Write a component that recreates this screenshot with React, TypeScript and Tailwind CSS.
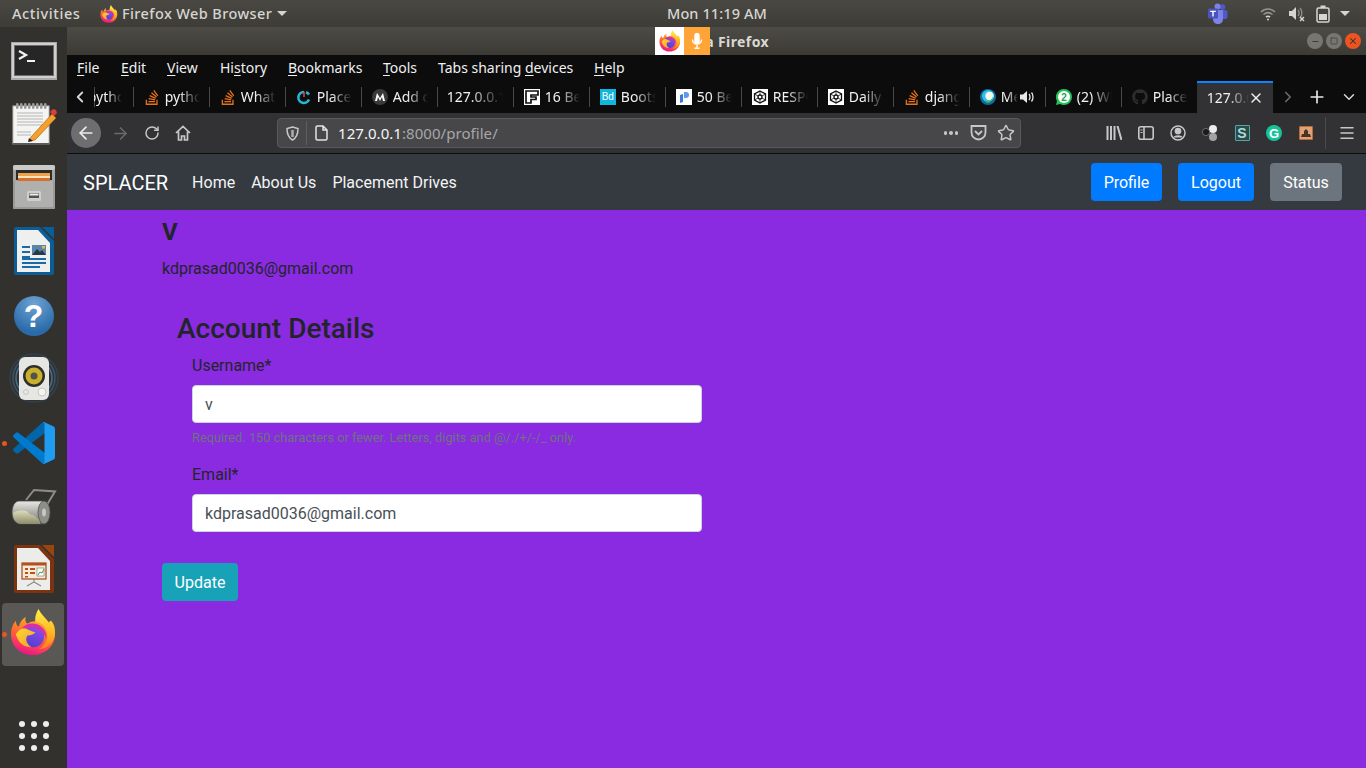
import React from "react";
import { ArrowLeft, ArrowRight, RotateCw, ChevronLeft, ChevronRight, ChevronDown, Plus, X, Star, Menu, Minus, Square } from "lucide-react";
import { FaStackOverflow, FaGithub } from "react-icons/fa";

function Firefox({ id, size }: { id: string; size: number }) {
  return (
    <svg width={size} height={size} viewBox="0 0 48 48" className="shrink-0">
      <defs>
        <linearGradient id={id + "a"} x1="0.7" y1="0.1" x2="0.35" y2="1">
          <stop offset="0" stopColor="#ffb02e" />
          <stop offset="0.45" stopColor="#ff6b2e" />
          <stop offset="0.8" stopColor="#f8306a" />
          <stop offset="1" stopColor="#e31587" />
        </linearGradient>
        <linearGradient id={id + "b"} x1="0.7" y1="0" x2="0.3" y2="1">
          <stop offset="0" stopColor="#9a4be8" />
          <stop offset="1" stopColor="#4b3fd0" />
        </linearGradient>
        <linearGradient id={id + "c"} x1="0" y1="0" x2="1" y2="1">
          <stop offset="0" stopColor="#ffe02e" />
          <stop offset="1" stopColor="#ffa124" />
        </linearGradient>
        <linearGradient id={id + "d"} x1="0.5" y1="0" x2="0.5" y2="1">
          <stop offset="0" stopColor="#fff04a" />
          <stop offset="0.6" stopColor="#ffb51f" />
          <stop offset="1" stopColor="#ff7a22" />
        </linearGradient>
      </defs>
      <path d="M46 25C46 38 36 47 23 47 10 47 1 38 1 25 1 20 3 15 6 12c0 3 1 5 3 6 1-4 3-7 7-10-1 4 0 6 2 7 4-3 8-3 12-2l10 2z" fill={`url(#${id}a)`} />
      <circle cx="23.500" cy="27.500" r="11.500" fill={`url(#${id}b)`} />
      <path d="M12 20c4-6 14-7 20-2 4 3 6 8 5 13-1-6-6-11-13-12-4 0-8 2-12 1z" fill="#d62fa8" />
      <path d="M29 0c-2 4-4 9-3 13 8 1 13 8 12 16-1 6-5 10-9 12 9 0 17-7 17-17 0-5-1-9-4-12-1 0-2 1-2 2-3-4-8-8-11-14z" fill={`url(#${id}d)`} />
      <path d="M6 26c2-4 6-7 10-6 3 1 6 3 10 4-2 2-5 3-8 3-3 3-1 9 4 12-7 0-13-3-16-13z" fill={`url(#${id}c)`} opacity="0.95" />
    </svg>
  );
}

function UTop({ children, u, after }: { children?: React.ReactNode; u: string; after?: string }) {
  return (
    <span>
      {children}
      <span className="underline underline-offset-2">{u}</span>
      {after}
    </span>
  );
}

function TopBar() {
  return (
    <div className="h-[27px] shrink-0 flex items-center bg-[linear-gradient(#4a4843,#3e3c37)] text-[#d6d5d1] text-[14.500px] font-medium">
      <span className="ml-[12px] w-[88px] whitespace-nowrap tracking-[0.6px]">Activities</span>
      <Firefox id="tb" size={18} />
      <span className="ml-[4px] w-[155px] whitespace-nowrap tracking-[0.4px]">Firefox Web Browser</span>
      <span className="w-0 h-0 border-x-[5px] border-x-transparent border-t-[5px] border-t-[#d6d5d1]" />
      <span className="ml-[380px] w-[99px] text-center whitespace-nowrap tracking-[0.1px]">Mon 11:19 AM</span>
      <span className="ml-[442px]">
        <svg width="20" height="22" viewBox="0 0 20 22">
          <circle cx="14.500" cy="4" r="2.800" fill="#5059c9" />
          <rect x="11" y="7" width="8.500" height="9" rx="2" fill="#5059c9" />
          <circle cx="9.500" cy="3.500" r="3" fill="#7b83eb" />
          <path d="M5 7h10v9c0 3-2 5-5 5s-5-2-5-5z" fill="#7b83eb" />
          <rect x="0" y="5.500" width="10" height="10" rx="1" fill="#4b53bc" />
          <path d="M2.200 7.800h5.600v1.200H5.700v4.600H4.300V9H2.200z" fill="#fff" />
        </svg>
      </span>
      <span className="ml-[32px]">
        <svg width="16" height="14" viewBox="0 0 16 14" fill="none" stroke="#d6d5d1" strokeWidth="1.600">
          <path d="M1 5c4-4 10-4 14 0" opacity=".55" />
          <path d="M3.500 7.500c3-2.500 6-2.500 9 0" opacity=".55" />
          <path d="M6 10c1.300-1 2.700-1 4 0" />
          <circle cx="8" cy="12.500" r="1" fill="#d6d5d1" stroke="none" />
        </svg>
      </span>
      <span className="ml-[13px]">
        <svg width="16" height="16" viewBox="0 0 16 16" fill="#d6d5d1">
          <path d="M0 5h3l4-4v13l-4-4H0z" />
          <path d="M9 4c1.500 1.500 1.500 4.500 0 6M11 2c2.500 2.500 2.500 7 0 10" fill="none" stroke="#8f8e8a" strokeWidth="1.300" />
          <path d="M11 11l4 4M15 11l-4 4" stroke="#d6d5d1" strokeWidth="1.400" />
        </svg>
      </span>
      <span className="ml-[11px]">
        <svg width="14" height="18" viewBox="0 0 14 18" fill="none">
          <rect x="1" y="3" width="12" height="14" rx="1.500" stroke="#d6d5d1" strokeWidth="1.500" />
          <rect x="4.500" y="0.500" width="5" height="2.500" fill="#d6d5d1" />
          <rect x="3" y="9" width="8" height="6" fill="#d6d5d1" />
        </svg>
      </span>
      <span className="ml-[10px] w-0 h-0 border-x-[5px] border-x-transparent border-t-[5px] border-t-[#d6d5d1]" />
    </div>
  );
}

function Terminal() {
  return (
    <svg width="46" height="38" viewBox="0 0 46 38">
      <rect width="46" height="38" fill="#a9a9a7" />
      <rect x="1" y="1" width="44" height="35" fill="#cfcfcd" />
      <rect x="3" y="3" width="40" height="31" fill="#6c6c6a" />
      <rect x="4" y="4" width="38" height="29" fill="#262626" />
      <path d="M8 9l7 4-7 4" fill="none" stroke="#f2f2f2" strokeWidth="2.200" />
      <path d="M16 19h8" stroke="#f2f2f2" strokeWidth="2" />
    </svg>
  );
}
function Notes() {
  return (
    <svg width="46" height="46" viewBox="0 0 46 46">
      <rect x="2" y="5" width="36" height="38" fill="#f4f4f2" stroke="#bcbcb8" />
      <rect x="2" y="42" width="36" height="2" fill="#5a5a58" />
      {[5, 9, 13, 17, 21, 25, 29, 33].map((x) => (
        <rect key={x} x={x} y="2" width="2.500" height="6" rx="1.200" fill="#9a9a98" />
      ))}
      {[12, 15, 18, 21, 24, 31, 34].map((y) => (
        <path key={y} d={`M6 ${y}h${y > 28 ? 14 : 26}`} stroke="#b5b5b3" strokeWidth="1" />
      ))}
      <path d="M20 36l21-23 4 4-21 22-6 1z" fill="#f5a02c" stroke="#a9650f" strokeWidth="0.700" />
      <path d="M39 11l3-3 3 1 1 3-3 3z" fill="#d9403a" />
      <path d="M18 37l-1 4 5-1z" fill="#222" />
    </svg>
  );
}
function Cabinet() {
  return (
    <svg width="42" height="44" viewBox="0 0 42 44">
      <rect width="42" height="44" rx="2" fill="#a6a6a4" />
      <rect width="42" height="5" rx="2" fill="#c9c9c7" />
      <rect x="3" y="5" width="36" height="10" fill="#2b2b2b" />
      <rect x="5" y="8" width="32" height="8" fill="#f0a24a" />
      <rect x="5" y="11" width="32" height="2" fill="#fbe3c0" />
      <rect x="5" y="13" width="32" height="3" fill="#d86f28" />
      <rect x="0" y="16" width="42" height="28" rx="1" fill="#9a9a98" />
      <rect x="2" y="16" width="38" height="26" fill="#b0b0ae" />
      <rect x="14" y="26" width="14" height="10" rx="1.500" fill="#cfcfcd" />
      <rect x="16" y="28" width="10" height="5" fill="#55554f" />
      <rect x="16.500" y="28.500" width="9" height="2" fill="#eee" />
    </svg>
  );
}
function Writer() {
  return (
    <svg width="40" height="48" viewBox="0 0 40 48">
      <path d="M2 0h24l14 14v32a2 2 0 0 1-2 2H2a2 2 0 0 1-2-2V2a2 2 0 0 1 2-2z" fill="#0b5d96" />
      <path d="M28 0h12v12z" fill="#0b5d96" />
      <path d="M3 3h21l12 13v29H3z" fill="#eef0f0" />
      <rect x="8" y="19" width="8" height="2" fill="#1b6aa5" />
      <rect x="8" y="24" width="8" height="2" fill="#1b6aa5" />
      <rect x="8" y="29" width="8" height="2" fill="#1b6aa5" />
      <rect x="18" y="18" width="14" height="10" fill="#5b84a8" />
      <path d="M18 28l5-6 3 3 2-2 4 5z" fill="#28384a" />
      <rect x="28" y="19" width="3" height="2.500" fill="#e8b93f" />
      <rect x="8" y="31" width="24" height="2" fill="#1b6aa5" />
      <rect x="8" y="35" width="24" height="2" fill="#1b6aa5" />
      <rect x="8" y="39" width="18" height="2" fill="#1b6aa5" />
    </svg>
  );
}
function Help() {
  return (
    <div className="mt-[2px] w-[40px] h-[40px] rounded-full bg-[radial-gradient(circle_at_50%_20%,#6fa3d4,#2a6aa8_75%)] flex items-center justify-center text-white text-[32px] font-bold font-['Liberation_Sans',sans-serif] leading-none">
      ?
    </div>
  );
}
function Speaker() {
  return (
    <svg width="50" height="50" viewBox="0 0 50 50">
      <circle cx="25" cy="25" r="24" fill="none" stroke="#2f4860" strokeWidth="1.500" opacity="0.7" />
      <circle cx="25" cy="25" r="21" fill="none" stroke="#3c5c7c" strokeWidth="1.500" opacity="0.8" />
      <circle cx="25" cy="25" r="18" fill="none" stroke="#4a6d90" strokeWidth="1.500" />
      <rect x="10" y="4" width="30" height="43" rx="6" fill="#e6e6e2" />
      <circle cx="25" cy="23" r="11" fill="#2e2e2a" />
      <circle cx="25" cy="23" r="8.500" fill="#c9b02c" />
      <circle cx="25" cy="23" r="3.500" fill="#55524a" />
      <circle cx="33" cy="39" r="4" fill="#f4f4f0" stroke="#c6c6c2" />
      <circle cx="17" cy="39" r="2.500" fill="none" stroke="#c6c6c2" />
    </svg>
  );
}
function VSCode() {
  return (
    <svg width="42" height="42" viewBox="0 0 100 100" className="mt-[3px]">
      <path d="M96.400 10.800L75.900 0.900a6.200 6.200 0 0 0-7.100 1.200L1.700 63.300a4.100 4.100 0 0 0 0 6.100l5.500 5a4.100 4.100 0 0 0 5.300.2L93.200 13.100c2.700-2.100 6.600-.1 6.600 3.300v-.2c0-2.400-1.400-4.600-3.400-5.400z" fill="#0065a9" />
      <path d="M96.400 89.200L75.900 99.100a6.200 6.200 0 0 1-7.100-1.200L1.700 36.700a4.100 4.100 0 0 1 0-6.100l5.500-5a4.100 4.100 0 0 1 5.300-.2L93.200 86.900c2.700 2.100 6.600.1 6.600-3.300v.2c0 2.400-1.400 4.600-3.400 5.400z" fill="#007acc" />
      <path d="M75.900 99.100a6.200 6.200 0 0 1-7.100-1.200c2.300 2.300 6.200.7 6.200-2.600V4.700c0-3.300-3.900-4.900-6.200-2.600a6.200 6.200 0 0 1 7.100-1.200L96.400 10.800A6.200 6.200 0 0 1 100 16.400v67.200a6.200 6.200 0 0 1-3.600 5.600z" fill="#1f9cf0" />
    </svg>
  );
}
function Roller() {
  return (
    <svg width="46" height="40" viewBox="0 0 46 40" className="mt-[3px]">
      <defs>
        <linearGradient id="rl" x1="0" y1="0" x2="0" y2="1">
          <stop offset="0" stopColor="#e8e8e4" />
          <stop offset="0.6" stopColor="#a2a29c" />
          <stop offset="1" stopColor="#70706a" />
        </linearGradient>
        <linearGradient id="rp" x1="0" y1="0" x2="0" y2="1">
          <stop offset="0" stopColor="#dcdcb8" />
          <stop offset="1" stopColor="#8c8c6c" />
        </linearGradient>
      </defs>
      <path d="M15 13L23 3l21 1.500L34 21" fill="none" stroke="#8d8d89" strokeWidth="2" />
      <path d="M8 14h24v23H10C4 37 1 32 1 25.500 1 19 4 14 8 14z" fill="url(#rl)" stroke="#4a4a46" strokeWidth="0.800" />
      <path d="M2 26c5-3 11-3 15-1 1 2 3 3 5 3l7 5v4H10C5 37 2 32 2 26z" fill="url(#rp)" />
      <ellipse cx="33" cy="25.500" rx="6" ry="11.500" fill="#8e8e88" stroke="#55554f" strokeWidth="0.800" />
      <ellipse cx="33" cy="25.500" rx="2" ry="4" fill="#c8c8c2" />
    </svg>
  );
}
function Impress() {
  return (
    <svg width="40" height="48" viewBox="0 0 40 48">
      <path d="M2 0h24l14 14v32a2 2 0 0 1-2 2H2a2 2 0 0 1-2-2V2a2 2 0 0 1 2-2z" fill="#7c3410" />
      <path d="M28 0h12v12z" fill="#9c4410" />
      <path d="M3 3h21l12 13v29H3z" fill="#ececea" />
      <rect x="8" y="18" width="24" height="16" fill="#f4ead8" stroke="#a6481a" strokeWidth="1.200" />
      <rect x="8" y="18" width="24" height="2.500" fill="#b4521e" />
      <rect x="11" y="23" width="3" height="2" fill="#b4521e" />
      <rect x="11" y="27" width="3" height="2" fill="#b4521e" />
      <rect x="11" y="31" width="3" height="1.500" fill="#b4521e" />
      <rect x="16" y="23" width="5" height="2" fill="#b4521e" />
      <rect x="16" y="27" width="5" height="2" fill="#b4521e" />
      <rect x="23" y="23" width="7" height="8" fill="#fff" stroke="#555" strokeWidth="0.500" />
      <path d="M24 30l2-3 2 1 2-4" fill="none" stroke="#3aa03a" strokeWidth="1" />
      <path d="M20 34v3l-7 4M20 37l7 4" fill="none" stroke="#8a8a88" strokeWidth="1.200" />
    </svg>
  );
}

function DockItem({ children, dot, active }: { children: React.ReactNode; dot?: boolean; active?: boolean }) {
  return (
    <div className="h-[63.600px] w-full relative flex items-center justify-center">
      {active && <div className="absolute left-[2px] right-[3px] top-[2px] bottom-[-2px] rounded-[4px] bg-[#5a5854]" />}
      {dot && <div className="absolute left-[2px] top-1/2 translate-y-[-1px] w-[5px] h-[5px] rounded-full bg-[#e95420] z-10" />}
      <div className="relative">{children}</div>
    </div>
  );
}

function Dock() {
  return (
    <div className="w-[67px] shrink-0 bg-[#33312e] flex flex-col pt-[1.500px]">
      <DockItem><div className="mt-[2px]"><Terminal /></div></DockItem>
      <DockItem><Notes /></DockItem>
      <DockItem><Cabinet /></DockItem>
      <DockItem><Writer /></DockItem>
      <DockItem><Help /></DockItem>
      <DockItem><Speaker /></DockItem>
      <DockItem dot><VSCode /></DockItem>
      <DockItem><Roller /></DockItem>
      <DockItem><Impress /></DockItem>
      <DockItem dot active><Firefox id="dk" size={47} /></DockItem>
      <div className="mt-auto mb-[17px] self-center grid grid-cols-3 gap-[6px]">
        {[0, 1, 2, 3, 4, 5, 6, 7, 8].map((i) => (
          <div key={i} className="w-[6px] h-[6px] rounded-full bg-[#eeeeec]" />
        ))}
      </div>
    </div>
  );
}

function TitleBar() {
  return (
    <div className="h-[28px] shrink-0 relative flex items-center bg-[linear-gradient(#4d4b45,#3c3a35)] text-[#d9d8d4] text-[14px] font-bold">
      <span className="w-[702px] text-right whitespace-nowrap tracking-[0.4px]">Mozilla Firefox</span>
      <div className="absolute left-[588px] top-0 w-[29px] h-[28px] bg-white flex items-center justify-center">
        <Firefox id="tt" size={22} />
      </div>
      <div className="absolute left-[617px] top-0 w-[26px] h-[28px] bg-[#ffa436] flex items-center justify-center">
        <svg width="12" height="16" viewBox="0 0 12 16" fill="none" stroke="#fff" strokeWidth="1.400">
          <rect x="4" y="0.500" width="4" height="9.500" rx="2" fill="#fff" />
          <path d="M1.500 6.500c0 6 9 6 9 0M6 12v3M3.500 15.300h5" />
        </svg>
      </div>
      <div className="ml-auto mr-[5px] flex items-center gap-[3px]">
        <span className="w-[16px] h-[16px] rounded-full bg-[#777670] flex items-center justify-center"><Minus size={9} color="#3a3935" strokeWidth={2.500} /></span>
        <span className="w-[16px] h-[16px] rounded-full bg-[#777670] flex items-center justify-center"><Square size={8} color="#3a3935" strokeWidth={2} /></span>
        <span className="w-[16px] h-[16px] rounded-full bg-[#e95420] flex items-center justify-center"><X size={10} color="#40302a" strokeWidth={2.500} /></span>
      </div>
    </div>
  );
}

function MenuBar() {
  return (
    <div className="h-[26px] shrink-0 bg-[#0c0c0d] text-[#f0f0f1] text-[14px] flex items-center pl-[10px] pb-[2px]">
      <span className="w-[44px]"><UTop u="F" after="ile" /></span>
      <span className="w-[46px]"><UTop u="E" after="dit" /></span>
      <span className="w-[53px]"><UTop u="V" after="iew" /></span>
      <span className="w-[68px]"><UTop u="s" after="tory">Hi</UTop></span>
      <span className="w-[95px]"><UTop u="B" after="ookmarks" /></span>
      <span className="w-[55px]"><UTop u="T" after="ools" /></span>
      <span className="w-[156px] whitespace-nowrap"><UTop u="d" after="evices">Tabs sharing </UTop></span>
      <span><UTop u="H" after="elp" /></span>
    </div>
  );
}

const so = <FaStackOverflow size={17} color="#e8701a" />;
function Whitesq({ children, bg = "bg-white" }: { children: React.ReactNode; bg?: string }) {
  return <span className={`w-[16px] h-[16px] shrink-0 flex items-center justify-center overflow-hidden ${bg}`}>{children}</span>;
}
const pen = (
  <Whitesq>
    <svg width="14" height="14" viewBox="0 0 14 14" fill="none" stroke="#111" strokeWidth="1.300">
      <path d="M7 1l5.500 3v6L7 13 1.500 10V4z" />
      <circle cx="7" cy="7" r="2" />
      <path d="M7 1v4M7 9v4M1.500 4L5 6M9 8l3.500 2M12.500 4L9 6M5 8l-3.500 2" strokeWidth="0.800" />
    </svg>
  </Whitesq>
);

function Tab({ icon, text, noIcon, extra, textW }: { icon?: React.ReactNode; text: string; noIcon?: boolean; extra?: React.ReactNode; textW?: string }) {
  return (
    <div className="w-[76px] shrink-0 h-full flex items-center overflow-hidden relative">
      <div className="w-px h-[20px] bg-[#48484a] shrink-0" />
      {icon && <span className="ml-[10px] w-[16px] h-[16px] flex items-center justify-center shrink-0">{icon}</span>}
      <span className={`${noIcon ? "ml-[9px]" : "ml-[5px]"} ${textW ?? (noIcon ? "w-[56px]" : "w-[35px]")} pb-[2px] overflow-hidden whitespace-nowrap text-[#f2f2f3] [mask-image:linear-gradient(to_right,#000_40%,transparent)]`}>{text}</span>
      {extra}
    </div>
  );
}

function TabBar() {
  return (
    <div className="h-[32px] shrink-0 bg-[#0c0c0d] flex items-stretch text-[14px]">
      <div className="w-[27px] flex items-center justify-center"><ChevronLeft size={18} color="#d7d7d9" strokeWidth={2.400} /></div>
      <div className="w-[39px] shrink-0 flex items-center overflow-hidden">
        <div className="w-px h-[20px] bg-[#48484a] shrink-0" />
        <span className="ml-[-7px] w-[34px] pb-[2px] overflow-hidden whitespace-nowrap text-[#f2f2f3] [mask-image:linear-gradient(to_right,#000_55%,transparent)]">pytho</span>
      </div>
      <Tab icon={so} text="python" />
      <Tab icon={so} text="What is" />
      <Tab
        icon={
          <svg width="16" height="16" viewBox="0 0 16 16" fill="none">
            <path d="M8 3a5.500 5.500 0 1 0 5 7.500" stroke="#22b8d6" strokeWidth="2.600" />
            <path d="M8 8V2.500" stroke="#e5484d" strokeWidth="1.500" />
            <path d="M13 5.500A5.500 5.500 0 0 0 10 3.300" stroke="#22b8d6" strokeWidth="2.600" />
          </svg>
        }
        text="Placement"
      />
      <Tab
        icon={
          <span className="w-[16px] h-[16px] rounded-full bg-[#3a3a3c] flex items-center justify-center">
            <svg width="10" height="8" viewBox="0 0 10 8" fill="#fff"><path d="M0 8l2-8 3 5 3-5 2 8H8L7 4 5 8 3 4 2 8z" /></svg>
          </span>
        }
        text="Add cus"
      />
      <Tab noIcon text="127.0.0.1:8000" />
      <Tab
        icon={
          <Whitesq>
            <svg width="16" height="16" viewBox="0 0 16 16" fill="none" stroke="#111" strokeWidth="1.700">
              <path d="M2 14V2h12v4H7v2h5v2.500H7V14z" />
            </svg>
          </Whitesq>
        }
        text="16 Best"
      />
      <Tab
        icon={<Whitesq bg="bg-[#12b5de]"><span className="text-white text-[10px] font-['Liberation_Sans',sans-serif] leading-none">Bd</span></Whitesq>}
        text="Bootstrap"
      />
      <Tab
        icon={
          <Whitesq>
            <svg width="10" height="13" viewBox="0 0 10 13">
              <path d="M1 4l3-1v8l-3 1z" fill="#3a7bd5" />
              <path d="M5 1h2c2 0 3 1 3 3s-1 3-3 3H5z" fill="#5d9cec" />
            </svg>
          </Whitesq>
        }
        text="50 Best"
      />
      <Tab icon={pen} text="RESPONSIVE" />
      <Tab icon={pen} text="Daily UI" />
      <Tab icon={so} text="django" />
      <Tab
        icon={
          <svg width="16" height="16" viewBox="0 0 16 16">
            <circle cx="8" cy="8" r="8" fill="#0f6a9f" />
            <circle cx="8" cy="7" r="6" fill="#35c0ea" />
            <circle cx="9.500" cy="7" r="4.200" fill="#f2fbef" />
            <path d="M5 12c4 1 7-1 8-5 0 4-2 7-6 7z" fill="#3cb55c" />
          </svg>
        }
        text="Meet"
        textW="w-[17px]"
        extra={
          <svg className="ml-[2px] shrink-0" width="15" height="14" viewBox="0 0 15 14" fill="#e8e8e8">
            <path d="M0 4.500h3L7 1v12L3 9.500H0z" />
            <path d="M9 4c1.300 1.500 1.300 4.500 0 6M11.500 2.500c2 2.500 2 6.500 0 9" fill="none" stroke="#e8e8e8" strokeWidth="1.300" />
          </svg>
        }
      />
      <Tab
        icon={
          <svg width="16" height="16" viewBox="0 0 16 16">
            <path d="M8 0a8 8 0 0 1 0 16c-1.500 0-2.800-.4-4-1l-4 1 1-4A8 8 0 0 1 8 0z" fill="#25c05a" />
            <circle cx="8" cy="8" r="6" fill="#fff" />
            <text x="8" y="11.500" textAnchor="middle" fontSize="10" fontWeight="700" fill="#17a84a" fontFamily="Liberation Sans">2</text>
          </svg>
        }
        text="(2) WhatsApp"
      />
      <Tab icon={<FaGithub size={16} color="#2e2e30" />} text="Placement" />
      <div className="w-[76px] shrink-0 bg-[#323234] border-t-[2px] border-[#0a84ff] flex items-center">
        <span className="ml-[10px] w-[42px] pb-[2px] overflow-hidden whitespace-nowrap text-[#f2f2f3] [mask-image:linear-gradient(to_right,#000_50%,transparent)]">127.0.0.1</span>
        <X size={16} color="#f2f2f3" strokeWidth={2} className="ml-[-1px] shrink-0" />
      </div>
      <div className="w-[30px] flex items-center justify-center"><ChevronRight size={18} color="#6b6b6d" strokeWidth={2.200} /></div>
      <div className="w-[30px] flex items-center justify-center"><Plus size={20} color="#e8e8ea" strokeWidth={2} /></div>
      <div className="w-[34px] flex items-center justify-center"><ChevronDown size={18} color="#d8d8da" strokeWidth={2} /></div>
    </div>
  );
}

function NavBar() {
  const c = "#c7c7c9";
  return (
    <div className="h-[41px] shrink-0 bg-[#323234] border-b border-[#0c0c0d] flex items-center text-[15px]">
      <div className="ml-[4px] w-[30px] h-[30px] rounded-full bg-[#6e6e70] flex items-center justify-center"><ArrowLeft size={20} color="#ededee" strokeWidth={2} /></div>
      <div className="ml-[2px] w-[34px] flex justify-center"><ArrowRight size={19} color="#6a6a6c" strokeWidth={2} /></div>
      <div className="w-[30px] flex justify-center"><RotateCw size={16} color={c} strokeWidth={2.200} /></div>
      <div className="w-[32px] flex justify-center">
        <svg width="16" height="16" viewBox="0 0 16 16" fill="none" stroke={c} strokeWidth="1.700">
          <path d="M1 8l7-6.500L15 8M3.500 6.500V15h3v-4h3v4h3V6.500" />
        </svg>
      </div>
      <div className="ml-[78px] w-[744px] h-[30px] rounded-[4px] bg-[#474749] border border-[#59595b] flex items-center text-[#f5f5f6]">
        <svg className="ml-[8px]" width="13" height="15" viewBox="0 0 13 15" fill="none" stroke={c} strokeWidth="1.500">
          <path d="M6.500 1L12 2.500c0 5-1 9-5.500 11.500C2 11.500 1 7.500 1 2.500z" />
          <path d="M6.500 4v7" strokeWidth="2.500" opacity="0.8" />
        </svg>
        <div className="ml-[7px] w-px h-[24px] bg-[#5e5e60]" />
        <svg className="ml-[8px]" width="13" height="16" viewBox="0 0 13 16" fill="none" stroke="#e4e4e6" strokeWidth="1.500">
          <path d="M1 2.500A1.500 1.500 0 0 1 2.500 1H8l4 4v8.500a1.500 1.500 0 0 1-1.500 1.500h-8A1.500 1.500 0 0 1 1 13.500zM8 1v4h4" />
        </svg>
        <span className="ml-[10px] tracking-[0.05px]">127.0.0.1<span className="text-[#a6a6a8]">:8000/profile/</span></span>
        <span className="ml-auto flex gap-[2px] mr-[12px]">
          <span className="w-[3.500px] h-[3.500px] rounded-full bg-[#c7c7c9]" />
          <span className="w-[3.500px] h-[3.500px] rounded-full bg-[#c7c7c9]" />
          <span className="w-[3.500px] h-[3.500px] rounded-full bg-[#c7c7c9]" />
        </span>
        <svg className="mr-[10px]" width="17" height="16" viewBox="0 0 17 16" fill="none" stroke={c} strokeWidth="1.800">
          <path d="M1.500 1h14v6.500a7 7 0 0 1-14 0z" />
          <path d="M5 6l3.500 3.500L12 6" />
        </svg>
        <Star size={18} color={c} strokeWidth={2} className="mr-[5px]" />
      </div>
      <div className="ml-[85px] w-[16px] flex justify-center">
        <svg width="16" height="14" viewBox="0 0 16 14" stroke={c} strokeWidth="2" fill="none"><path d="M1.500 0v14M5 0v14M8.500 0v14M11.500 0l4 14" /></svg>
      </div>
      <div className="ml-[16px] w-[16px] flex justify-center">
        <svg width="16" height="14" viewBox="0 0 16 14" fill="none" stroke={c} strokeWidth="1.600">
          <rect x="0.800" y="0.800" width="14.400" height="12.400" rx="2" />
          <path d="M6 1v12" />
          <path d="M2.500 4h2M2.500 6.500h2" strokeWidth="1.200" />
        </svg>
      </div>
      <div className="ml-[16px] w-[16px] flex justify-center">
        <svg width="16" height="16" viewBox="0 0 16 16" fill="none" stroke={c} strokeWidth="1.500">
          <circle cx="8" cy="8" r="7" />
          <circle cx="8" cy="6" r="2.600" fill={c} />
          <path d="M3 12.500c2-3 8-3 10 0" fill={c} stroke="none" />
        </svg>
      </div>
      <div className="ml-[16px] w-[16px] flex justify-center">
        <svg width="16" height="16" viewBox="0 0 16 16">
          <circle cx="11" cy="4" r="4" fill="#ececec" />
          <circle cx="11" cy="12" r="4" fill="#a2a2a2" />
          <circle cx="4" cy="7" r="3.600" fill="#1a1a1a" stroke="#8a8a8a" strokeWidth="0.700" />
        </svg>
      </div>
      <div className="ml-[16px] w-[16px] flex justify-center">
        <div className="w-[15px] h-[16px] bg-[#2b4a4c] border border-[#4fa8a5] rounded-[1px] text-[#a9dcd8] text-[14px] font-bold leading-[14px] text-center font-['Liberation_Sans',sans-serif]">S</div>
      </div>
      <div className="ml-[16px] w-[16px] flex justify-center">
        <div className="w-[16px] h-[16px] rounded-full bg-[#15c39a] flex items-center justify-center text-white text-[13px] font-bold leading-none font-['Liberation_Sans',sans-serif]">G</div>
      </div>
      <div className="ml-[16px] w-[16px] flex justify-center">
        <svg width="14" height="14" viewBox="0 0 14 14">
          <rect width="14" height="14" rx="1" fill="#b9693c" />
          <rect x="1" y="1" width="12" height="12" fill="#e0a274" />
          <path d="M2 11l1-3h2V5l2-2 2 2v3h2l1 3z" fill="#4a3428" />
        </svg>
      </div>
      <div className="ml-[11px] w-px h-[32px] bg-[#4a4a4c]" />
      <Menu size={18} color={c} strokeWidth={2} className="ml-[12px]" />
    </div>
  );
}

function Field({ label, value, hint }: { label: string; value: string; hint?: string }) {
  return (
    <div className="mb-[15px] w-[510px]">
      <label className="block mb-[7px] leading-6">{label}</label>
      <div className="h-[38px] bg-white rounded-[4px] border border-[#ced4da] px-3 pt-[2px] flex items-center text-[#495057]">{value}</div>
      {hint && <small className="block mt-[5px] text-[12.800px] leading-[19.200px] text-[#6c757d]">{hint}</small>}
    </div>
  );
}

const btn = "h-[38px] pt-[2px] rounded-[4px] text-white flex items-center justify-center";

function Page() {
  return (
    <div className="flex-1 flex flex-col font-['Roboto',sans-serif] text-[16px]">
      <nav className="h-[56px] shrink-0 bg-[#343a40] flex items-center px-4">
        <span className="text-[20px] text-white mr-4 pt-[1px]">SPLACER</span>
        <span className="text-[#f4f4f5] px-2 pt-[2px]">Home</span>
        <span className="text-[#f4f4f5] px-2 pt-[2px]">About Us</span>
        <span className="text-[#f4f4f5] px-2 pt-[2px]">Placement Drives</span>
        <span className={`ml-auto w-[71px] bg-[#007bff] ${btn}`}>Profile</span>
        <span className={`ml-4 w-[76px] bg-[#007bff] ${btn}`}>Logout</span>
        <span className={`ml-4 w-[72px] bg-[#6c757d] ${btn}`}>Status</span>
        <span className="w-[8px]" />
      </nav>
      <main className="flex-1 bg-[#8a2be2] text-[#212529] pl-[95px]">
        <h2 className="text-[24px] font-bold leading-[28.800px] mt-[8px] mb-2">V</h2>
        <p className="leading-6 mt-[10px]">kdprasad0036@gmail.com</p>
        <div className="mt-[31px] pl-[15px]">
          <h3 className="text-[28px] font-medium leading-[33.600px] mb-[9px]">Account Details</h3>
          <div className="pl-[15px]">
            <Field label="Username*" value="v" hint="Required. 150 characters or fewer. Letters, digits and @/./+/-/_ only." />
            <Field label="Email*" value="kdprasad0036@gmail.com" />
          </div>
        </div>
        <div className={`mt-[31px] w-[76px] bg-[#17a2b8] ${btn}`}>Update</div>
      </main>
    </div>
  );
}

export default function App() {
  return (
    <div className="w-[1366px] h-[768px] overflow-hidden flex flex-col font-['Noto_Sans',sans-serif]">
      <TopBar />
      <div className="flex-1 flex min-h-0">
        <Dock />
        <div className="flex-1 flex flex-col min-w-0">
          <TitleBar />
          <MenuBar />
          <TabBar />
          <NavBar />
          <Page />
        </div>
      </div>
    </div>
  );
}
